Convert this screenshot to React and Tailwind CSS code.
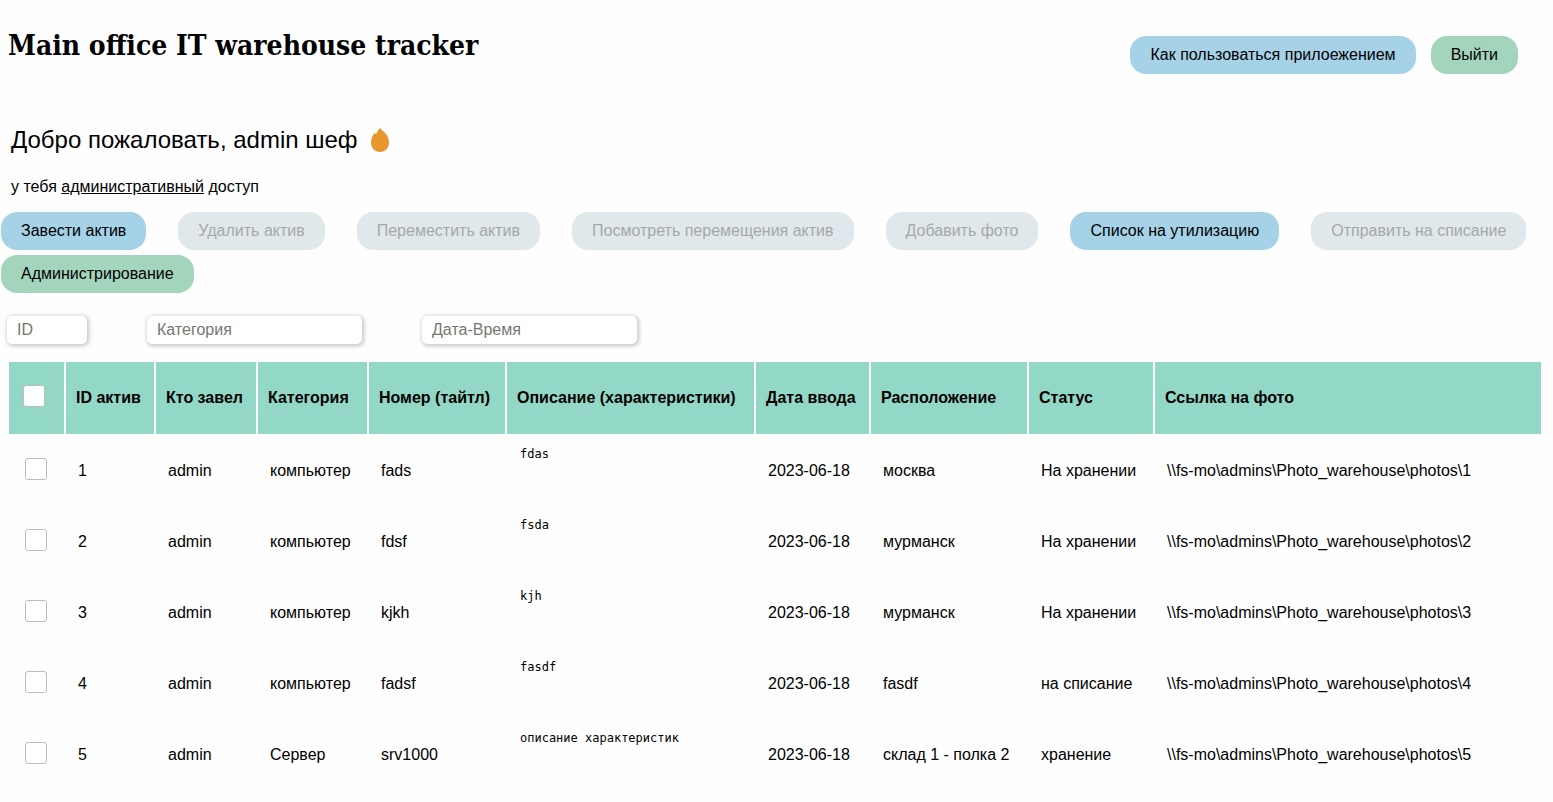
const toolbar = [
  { label: 'Завести актив', tone: 'blue' },
  { label: 'Удалить актив', tone: 'off' },
  { label: 'Переместить актив', tone: 'off' },
  { label: 'Посмотреть перемещения актив', tone: 'off' },
  { label: 'Добавить фото', tone: 'off' },
  { label: 'Список на утилизацию', tone: 'blue' },
  { label: 'Отправить на списание', tone: 'off' },
  { label: 'Администрирование', tone: 'green' },
];

const tones = {
  blue: 'bg-[#a5d2e7] text-black',
  green: 'bg-[#a3d5bc] text-black',
  off: 'bg-[#e0e8eb] text-[#a4a8aa]',
};

const columns = [
  { label: 'ID актив', width: 'w-[88px]' },
  { label: 'Кто завел', width: 'w-[100px]' },
  { label: 'Категория', width: 'w-[109px]' },
  { label: 'Номер (тайтл)', width: 'w-[136px]' },
  { label: 'Описание (характеристики)', width: 'w-[247px]' },
  { label: 'Дата ввода', width: 'w-[113px]' },
  { label: 'Расположение', width: 'w-[156px]' },
  { label: 'Статус', width: 'w-[124px]' },
  { label: 'Ссылка на фото', width: 'w-auto' },
];

const assets = [
  { id: 1, category: 'компьютер', title: 'fads', details: 'fdas', place: 'москва', status: 'На хранении' },
  { id: 2, category: 'компьютер', title: 'fdsf', details: 'fsda', place: 'мурманск', status: 'На хранении' },
  { id: 3, category: 'компьютер', title: 'kjkh', details: 'kjh', place: 'мурманск', status: 'На хранении' },
  { id: 4, category: 'компьютер', title: 'fadsf', details: 'fasdf', place: 'fasdf', status: 'на списание' },
  { id: 5, category: 'Сервер', title: 'srv1000', details: 'описание характеристик', place: 'склад 1 - полка 2', status: 'хранение' },
];

const filters = [
  { label: 'ID', width: 'w-20' },
  { label: 'Категория', width: 'w-[215px]' },
  { label: 'Дата-Время', width: 'w-[215px]' },
];

function PillButton({ tone, children }) {
  return (
    <button
      type="button"
      disabled={tone === 'off'}
      className={`h-[38px] whitespace-nowrap rounded-2xl px-5 ${tones[tone]}`}
    >
      {children}
    </button>
  );
}

function Tick({ label }) {
  return (
    <input
      type="checkbox"
      aria-label={label}
      className="block size-[22px] appearance-none rounded-[3px] border border-[#bdbdb9] bg-white checked:bg-[#93d8c6]"
    />
  );
}

function Flame() {
  return (
    <svg viewBox="0 0 18 24" className="h-6 w-[18px]" fill="#e8962e" aria-hidden="true">
      <path d="M9.2 0C7.600 1.200 6.300 3.200 5.500 5.600C4.900 5.800 4.200 5.300 3.500 5C1.500 7.500 0 11 0 14.800C0 20.300 4 24 9 24S18 20.300 18 14.500C18 11.200 16.800 8.200 14.600 5.600C13.100 3.800 10.800 2.200 9.200 0Z" />
    </svg>
  );
}

export default function App() {
  return (
    <div className="min-h-screen bg-[#fefefe] pb-4 font-['Liberation_Sans',Arial,sans-serif] text-base text-black">
      <header className="flex items-start justify-between pl-2 pr-[35px] pt-7">
        <h1 className="font-['DejaVu_Serif_Condensed','Liberation_Serif',serif] text-[28px] font-bold leading-9">
          Main office IT warehouse tracker
        </h1>
        <div className="flex gap-[15px] pt-2">
          <PillButton tone="blue">Как пользоваться прилоежением</PillButton>
          <PillButton tone="green">Выйти</PillButton>
        </div>
      </header>

      <section className="px-[11px] pt-[50px]">
        <h2 className="flex items-center gap-[13px] text-2xl leading-8">
          Добро пожаловать, admin шеф
          <Flame />
        </h2>
        <p className="pt-[19px] leading-6">
          у тебя <span className="underline">административный</span> доступ
        </p>
      </section>

      <nav className="flex flex-wrap gap-x-8 gap-y-[5px] px-px pt-[13px]">
        {toolbar.map((item) => (
          <PillButton key={item.label} tone={item.tone}>
            {item.label}
          </PillButton>
        ))}
      </nav>

      <form className="flex gap-[60px] pl-[7px] pt-[23px]">
        {filters.map((filter) => (
          <input
            key={filter.label}
            type="text"
            aria-label={filter.label}
            placeholder={filter.label}
            className={`h-7 rounded-[5px] bg-white px-[10px] shadow-[1px_1px_4px_1px_#c4c6c0] placeholder:text-[#777770] ${filter.width}`}
          />
        ))}
      </form>

      <div className="pl-[7px] pr-[10px] pt-4">
        <table className="w-full table-fixed border-separate border-spacing-[2px] text-left">
          <thead>
            <tr className="h-[72px]">
              <th className="w-[55px] bg-[#93d8c6] pb-1 pl-[14px]">
                <Tick label="Выбрать все" />
              </th>
              {columns.map((column) => (
                <th key={column.label} className={`whitespace-nowrap bg-[#93d8c6] px-[10px] ${column.width}`}>
                  {column.label}
                </th>
              ))}
            </tr>
          </thead>
          <tbody>
            {assets.map((asset) => (
              <tr key={asset.id} className="h-[69px] whitespace-nowrap">
                <td className="pb-1 pl-4">
                  <Tick label={`Выбрать актив ${asset.id}`} />
                </td>
                <td className="px-3">{asset.id}</td>
                <td className="px-3">admin</td>
                <td className="px-3">{asset.category}</td>
                <td className="px-3">{asset.title}</td>
                <td className="px-[13px] pt-[10px] align-top font-['DejaVu_Sans_Mono',monospace] text-xs">
                  {asset.details}
                </td>
                <td className="px-3">2023-06-18</td>
                <td className="px-3">{asset.place}</td>
                <td className="px-3">{asset.status}</td>
                <td className="px-3">{`\\\\fs-mo\\admins\\Photo_warehouse\\photos\\${asset.id}`}</td>
              </tr>
            ))}
          </tbody>
        </table>
      </div>
    </div>
  );
}
